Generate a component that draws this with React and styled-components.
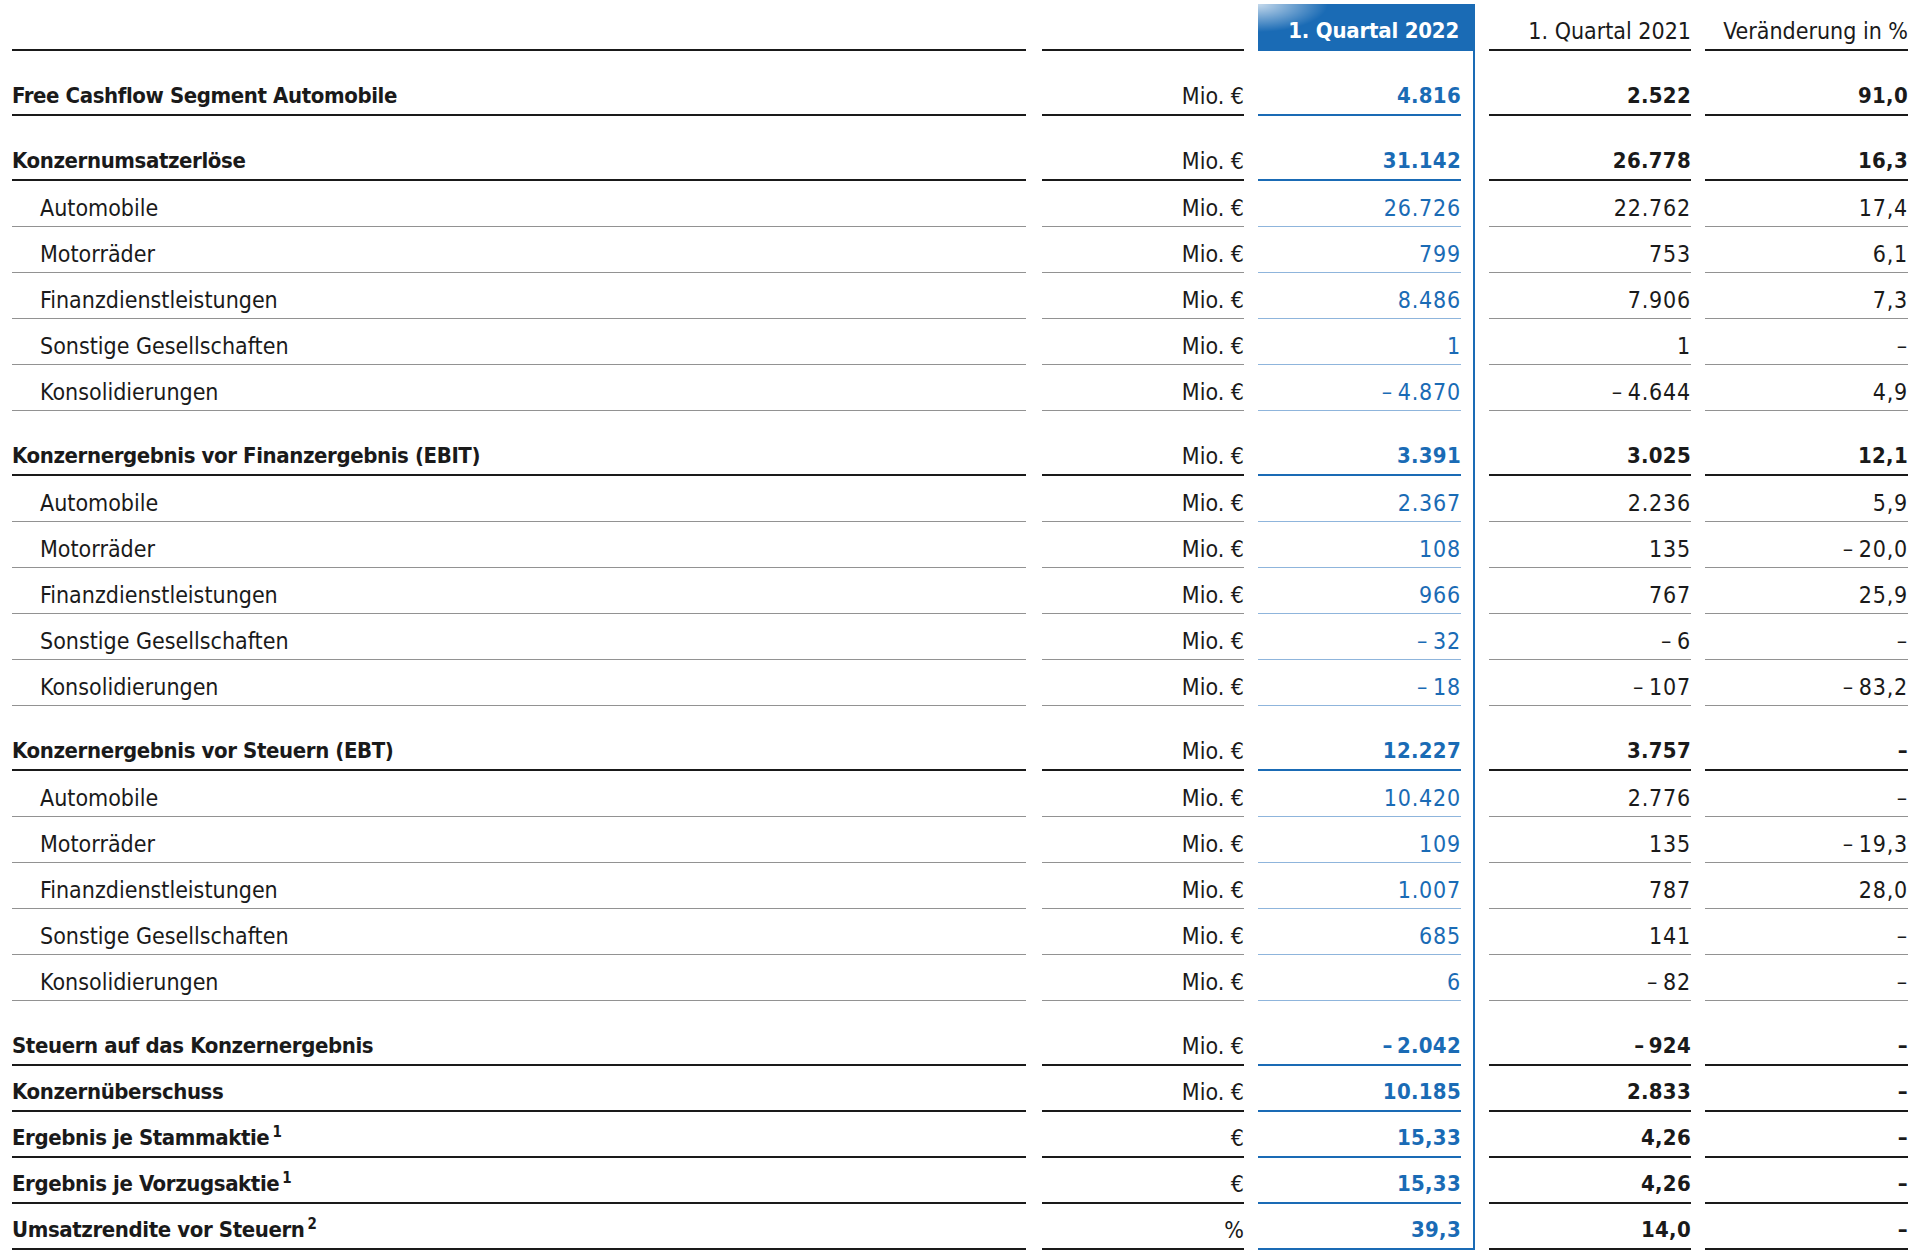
import React from 'react';
import styled, { createGlobalStyle } from 'styled-components';

const BLUE = '#1a6bb5';
const INK = '#1a1a1a';

const GlobalStyle = createGlobalStyle`
  html, body {
    margin: 0;
    padding: 0;
    background: #ffffff;
  }
  body {
    font-family: "DejaVu Sans Condensed", "Liberation Sans Narrow", "DejaVu Sans", sans-serif;
    font-stretch: condensed;
    color: ${INK};
  }
`;

const Page = styled.div`
  padding: 0 12px;
  width: 1896px;
`;

const Row = styled.div`
  display: grid;
  grid-template-columns: 1014px 204px 217px 202px 203px;
  column-gap: 14px;
  height: ${p => (p.$group ? 65 : 46)}px;
`;

const HeaderRow = styled(Row)`
  height: 51px;
`;

const spacing = p => {
  if (p.$num) return p.$bold ? '0.3px' : '0.8px';
  return p.$bold ? '-0.4px' : '0';
};

const Cell = styled.div`
  box-sizing: border-box;
  height: 100%;
  display: flex;
  align-items: flex-end;
  justify-content: ${p => (p.$left ? 'flex-start' : 'flex-end')};
  padding-bottom: 5px;
  padding-left: ${p => (p.$indent ? 28 : 0)}px;
  font-size: ${p => (p.$bold ? 22 : 23)}px;
  font-weight: ${p => (p.$bold ? 700 : 400)};
  letter-spacing: ${spacing};
  line-height: 26px;
  white-space: nowrap;
  color: ${p => (p.$blue ? BLUE : INK)};
  border-bottom: ${p => {
    if (p.$noLine) return 'none';
    if (p.$blue) return p.$bold ? `2px solid ${BLUE}` : '1px solid #8fb5dc';
    return p.$bold ? `2px solid ${INK}` : '1px solid #929292';
  }};
`;

const Unit = styled(Cell)`
  margin-left: 2px;
  font-size: 23px;
  font-weight: 400;
  letter-spacing: 0;
`;

const CurrentFrame = styled.div`
  box-sizing: border-box;
  height: 100%;
  display: flex;
  flex-direction: column;
  padding-right: ${p => (p.$closing ? 0 : 12)}px;
  border-right: 2px solid ${BLUE};
  border-bottom: ${p => (p.$closing ? `2px solid ${BLUE}` : 'none')};
`;

const CurrentCell = styled(Cell)`
  padding-right: ${p => (p.$closing ? 12 : 0)}px;
`;

const HeadLine = styled.div`
  box-sizing: border-box;
  height: 100%;
  margin-left: ${p => (p.$shift ? 2 : 0)}px;
  display: flex;
  align-items: flex-end;
  justify-content: flex-end;
  padding-bottom: 5px;
  font-size: 23px;
  line-height: 26px;
  white-space: nowrap;
  border-bottom: 2px solid ${INK};
`;

const CurrentHead = styled.div`
  box-sizing: border-box;
  margin-top: 4px;
  height: 47px;
  display: flex;
  align-items: flex-end;
  justify-content: flex-end;
  padding: 0 16px 7px 0;
  font-size: 22px;
  font-weight: 700;
  letter-spacing: -0.2px;
  line-height: 26px;
  color: #ffffff;
  white-space: nowrap;
  background:
    radial-gradient(ellipse 70px 28px at 0 0, rgba(255, 255, 255, 0.75), rgba(255, 255, 255, 0) 100%),
    ${BLUE};
`;

const Label = styled.span`
  white-space: nowrap;
`;

const Note = styled.sup`
  font-size: 15px;
  line-height: 0;
  margin-left: 3px;
  vertical-align: 8px;
`;

const rows = [
  { label: 'Free Cashflow Segment Automobile', unit: 'Mio. €', cur: '4.816', prev: '2.522', chg: '91,0', bold: true, group: true },
  { label: 'Konzernumsatzerlöse', unit: 'Mio. €', cur: '31.142', prev: '26.778', chg: '16,3', bold: true, group: true },
  { label: 'Automobile', unit: 'Mio. €', cur: '26.726', prev: '22.762', chg: '17,4' },
  { label: 'Motorräder', unit: 'Mio. €', cur: '799', prev: '753', chg: '6,1' },
  { label: 'Finanzdienstleistungen', unit: 'Mio. €', cur: '8.486', prev: '7.906', chg: '7,3' },
  { label: 'Sonstige Gesellschaften', unit: 'Mio. €', cur: '1', prev: '1', chg: '–' },
  { label: 'Konsolidierungen', unit: 'Mio. €', cur: '–\u20094.870', prev: '–\u20094.644', chg: '4,9' },
  { label: 'Konzernergebnis vor Finanzergebnis (EBIT)', unit: 'Mio. €', cur: '3.391', prev: '3.025', chg: '12,1', bold: true, group: true },
  { label: 'Automobile', unit: 'Mio. €', cur: '2.367', prev: '2.236', chg: '5,9' },
  { label: 'Motorräder', unit: 'Mio. €', cur: '108', prev: '135', chg: '–\u200920,0' },
  { label: 'Finanzdienstleistungen', unit: 'Mio. €', cur: '966', prev: '767', chg: '25,9' },
  { label: 'Sonstige Gesellschaften', unit: 'Mio. €', cur: '–\u200932', prev: '–\u20096', chg: '–' },
  { label: 'Konsolidierungen', unit: 'Mio. €', cur: '–\u200918', prev: '–\u2009107', chg: '–\u200983,2' },
  { label: 'Konzernergebnis vor Steuern (EBT)', unit: 'Mio. €', cur: '12.227', prev: '3.757', chg: '–', bold: true, group: true },
  { label: 'Automobile', unit: 'Mio. €', cur: '10.420', prev: '2.776', chg: '–' },
  { label: 'Motorräder', unit: 'Mio. €', cur: '109', prev: '135', chg: '–\u200919,3' },
  { label: 'Finanzdienstleistungen', unit: 'Mio. €', cur: '1.007', prev: '787', chg: '28,0' },
  { label: 'Sonstige Gesellschaften', unit: 'Mio. €', cur: '685', prev: '141', chg: '–' },
  { label: 'Konsolidierungen', unit: 'Mio. €', cur: '6', prev: '–\u200982', chg: '–' },
  { label: 'Steuern auf das Konzernergebnis', unit: 'Mio. €', cur: '–\u20092.042', prev: '–\u2009924', chg: '–', bold: true, group: true },
  { label: 'Konzernüberschuss', unit: 'Mio. €', cur: '10.185', prev: '2.833', chg: '–', bold: true },
  { label: 'Ergebnis je Stammaktie', note: '1', unit: '€', cur: '15,33', prev: '4,26', chg: '–', bold: true },
  { label: 'Ergebnis je Vorzugsaktie', note: '1', unit: '€', cur: '15,33', prev: '4,26', chg: '–', bold: true },
  { label: 'Umsatzrendite vor Steuern', note: '2', unit: '%', cur: '39,3', prev: '14,0', chg: '–', bold: true },
];

const DataRow = ({ row, closing }) => (
  <Row $group={row.group}>
    <Cell $left $indent={!row.bold} $bold={row.bold}>
      <Label>
        {row.label}
        {row.note && <Note>{row.note}</Note>}
      </Label>
    </Cell>
    <Unit $bold={row.bold}>{row.unit}</Unit>
    <CurrentFrame $closing={closing}>
      <CurrentCell $num $blue $bold={row.bold} $closing={closing} $noLine={closing}>
        {row.cur}
      </CurrentCell>
    </CurrentFrame>
    <Cell $num $bold={row.bold}>{row.prev}</Cell>
    <Cell $num $bold={row.bold}>{row.chg}</Cell>
  </Row>
);

export default function App() {
  return (
    <>
      <GlobalStyle />
      <Page>
        <HeaderRow>
          <HeadLine />
          <HeadLine $shift />
          <CurrentHead>1. Quartal 2022</CurrentHead>
          <HeadLine>1. Quartal 2021</HeadLine>
          <HeadLine>Veränderung in %</HeadLine>
        </HeaderRow>
        {rows.map((row, i) => (
          <DataRow key={i} row={row} closing={i === rows.length - 1} />
        ))}
      </Page>
    </>
  );
}
